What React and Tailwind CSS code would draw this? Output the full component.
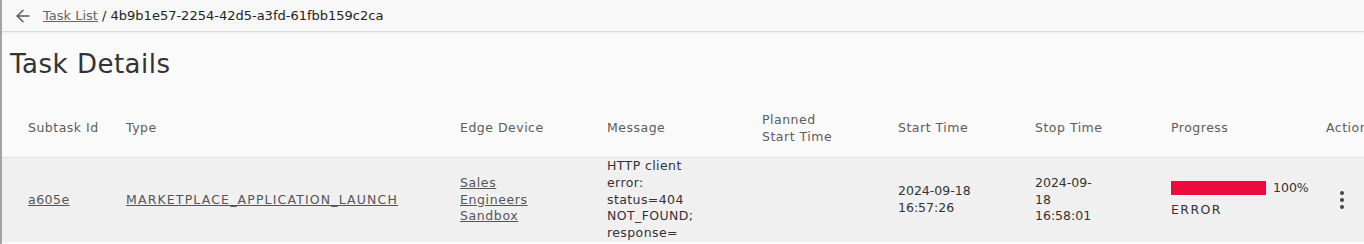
import { ArrowLeft } from 'lucide-react';

const font = { fontFamily: '"DejaVu Sans", "Liberation Sans", sans-serif' };

const columns = [
    { label: ['Subtask Id'], width: 'w-[98px]' },
    { label: ['Type'], width: 'w-[334px]' },
    { label: ['Edge Device'], width: 'w-[147px]' },
    { label: ['Message'], width: 'w-[155px]' },
    { label: ['Planned', 'Start Time'], width: 'w-[136px]' },
    { label: ['Start Time'], width: 'w-[137px]' },
    { label: ['Stop Time'], width: 'w-[136px]' },
    { label: ['Progress'], width: 'w-[155px]' },
    { label: ['Actions'], width: 'w-[80px]' },
];

const Lines = ({ lines, link, className = '' }) => (
    <div className={`flex flex-col leading-[16.8px] ${link ? 'underline text-[#555]' : ''} ${className}`}>
        {lines.map((l, i) => <span key={i} className="whitespace-nowrap">{l}</span>)}
    </div>
);

const App = () => {
    return (
        <div className="w-[1364px] h-[244px] overflow-hidden bg-[#fafafa] border-l-2 border-[#a3a3a3] text-[#333] text-[12.5px]" style={font}>
            <div className="h-[32px] flex items-center gap-[10px] pl-[11px] bg-[#f8f8f8] border-b border-[#dcdcdc] shadow-[0_1px_2px_rgba(0,0,0,0.06)]">
                <ArrowLeft size={20} strokeWidth={1.6} className="text-[#555]" />
                <div className="text-[13px]">
                    <span className="underline text-[#666]">Task List</span>
                    <span className="text-[#222]"> / 4b9b1e57-2254-42d5-a3fd-61fbb159c2ca</span>
                </div>
            </div>

            <h1 className="pl-[8px] pt-[16px] text-[26px] leading-[32px] tracking-[0.5px] text-[#333]">Task Details</h1>

            <div className="mt-[20px] pl-[26px] flex h-[58px] items-center text-[#5c5c5c] border-b border-[#e2e2e2] whitespace-nowrap tracking-[0.5px]">
                {columns.map((c, i) => (
                    <div key={i} className={`${c.width} shrink-0`}>
                        <Lines lines={c.label} />
                    </div>
                ))}
            </div>

            <div className="pl-[26px] flex h-[84px] items-center bg-[#f0f0f0] whitespace-nowrap">
                <div className="w-[98px] shrink-0"><Lines lines={['a605e']} link className="tracking-[0.5px]" /></div>
                <div className="w-[334px] shrink-0"><Lines lines={['MARKETPLACE_APPLICATION_LAUNCH']} link className="tracking-[1.15px]" /></div>
                <div className="w-[147px] shrink-0"><Lines lines={['Sales', 'Engineers', 'Sandbox']} link className="tracking-[0.6px]" /></div>
                <div className="w-[155px] shrink-0 self-start h-[84px] overflow-hidden">
                    <Lines lines={['HTTP client', 'error:', 'status=404', 'NOT_FOUND;', 'response=', '{"message":']} className="tracking-[0.4px]" />
                </div>
                <div className="w-[136px] shrink-0" />
                <div className="w-[137px] shrink-0"><Lines lines={['2024-09-18', '16:57:26']} /></div>
                <div className="w-[136px] shrink-0"><Lines lines={['2024-09-', '18', '16:58:01']} /></div>
                <div className="w-[155px] shrink-0 -mt-[2px]">
                    <div className="flex items-center gap-[7px]">
                        <div className="w-[95px] h-[14px] bg-[#ec0a3f]" />
                        <span>100%</span>
                    </div>
                    <div className="mt-[3px] tracking-[1.4px]">ERROR</div>
                </div>
                <div className="w-[80px] shrink-0 flex">
                    <svg width="8" height="20" viewBox="0 0 8 20" className="ml-[12px]">
                        <circle cx="4" cy="3" r="2" fill="#444" />
                        <circle cx="4" cy="10" r="2" fill="#444" />
                        <circle cx="4" cy="17" r="2" fill="#444" />
                    </svg>
                </div>
            </div>
        </div>
    );
};

export default App;
